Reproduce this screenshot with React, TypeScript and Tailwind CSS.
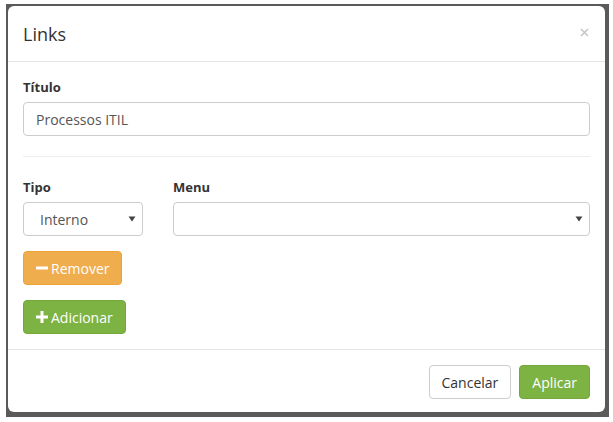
import React from "react";

const font = { fontFamily: '"Open Sans", "Liberation Sans", sans-serif' };

function Caret() {
    return (
        <svg width="8" height="6" viewBox="0 0 8 6" className="shrink-0">
            <path d="M0.5 0.5 H7.5 L4 5.5 Z" fill="#444" />
        </svg>
    );
}

function MinusIcon() {
    return (
        <svg width="12" height="12" viewBox="0 0 12 12" className="shrink-0">
            <rect x="0" y="4.5" width="12" height="3" fill="#fff" />
        </svg>
    );
}

function PlusIcon() {
    return (
        <svg width="12" height="12" viewBox="0 0 12 12" className="shrink-0">
            <rect x="0" y="4.5" width="12" height="3" fill="#fff" />
            <rect x="4.5" y="0" width="3" height="12" fill="#fff" />
        </svg>
    );
}

function CloseIcon() {
    return (
        <svg width="9" height="9" viewBox="0 0 9 9" className="shrink-0">
            <path d="M1 1 L8 8 M8 1 L1 8" stroke="#c6c6c6" strokeWidth="1.6" />
        </svg>
    );
}

export default function App() {
    return (
        <div className="w-[613px] h-[422px] bg-white pl-[6px] pt-[4px]" style={font}>
            <div className="w-[603px] h-[413px] bg-[#5a5a5a] pl-[2px] pt-[2px]">
                <div className="w-[597px] h-[406px] bg-white rounded-[6px] flex flex-col text-[#333]">
                    {/* Header */}
                    <div className="h-[56px] border-b border-[#e5e5e5] px-[15px] flex items-center justify-between">
                        <h4 className="text-[18px] leading-[26px] text-[#333]">Links</h4>
                        <span className="mr-[1px] -mt-[3px]">
                            <CloseIcon />
                        </span>
                    </div>

                    {/* Body */}
                    <div className="px-[15px] pt-[15px] pb-[15px]">
                        <label className="block text-[13px] font-bold leading-[20px] mb-[5px]">Título</label>
                        <div className="h-[34px] border border-[#ccc] rounded-[4px] flex items-center px-[12px] text-[14px] text-[#555]">
                            Processos ITIL
                        </div>

                        <div className="h-px bg-[#eee] my-[20px]" />

                        <div className="flex gap-[30px]">
                            <div className="w-[120px]">
                                <label className="block text-[13px] font-bold leading-[20px] mb-[5px]">Tipo</label>
                                <div className="h-[34px] border border-[#ccc] rounded-[4px] flex items-center justify-between pl-[16px] pr-[6px] text-[14px] text-[#555]">
                                    <span>Interno</span>
                                    <Caret />
                                </div>
                            </div>
                            <div className="flex-1">
                                <label className="block text-[13px] font-bold leading-[20px] mb-[5px]">Menu</label>
                                <div className="h-[34px] border border-[#ccc] rounded-[4px] flex items-center justify-end pr-[6px]">
                                    <Caret />
                                </div>
                            </div>
                        </div>

                        <div className="mt-[15px] flex flex-col items-start gap-[15px]">
                            <button className="h-[34px] px-[12px] rounded-[4px] bg-[#f0ad4e] border border-[#eea236] text-white text-[14px] flex items-center gap-[3px]">
                                <MinusIcon />
                                Remover
                            </button>
                            <button className="h-[34px] px-[12px] rounded-[4px] bg-[#7cb342] border border-[#74a83d] text-white text-[14px] flex items-center gap-[3px]">
                                <PlusIcon />
                                Adicionar
                            </button>
                        </div>
                    </div>

                    {/* Footer */}
                    <div className="border-t border-[#e5e5e5] px-[15px] pt-[15px] flex justify-end gap-[8px]">
                        <button className="h-[34px] px-[12px] rounded-[4px] bg-white border border-[#ccc] text-[#333] text-[14px]">
                            Cancelar
                        </button>
                        <button className="h-[34px] px-[12px] rounded-[4px] bg-[#7cb342] border border-[#74a83d] text-white text-[14px]">
                            Aplicar
                        </button>
                    </div>
                </div>
            </div>
        </div>
    );
}
